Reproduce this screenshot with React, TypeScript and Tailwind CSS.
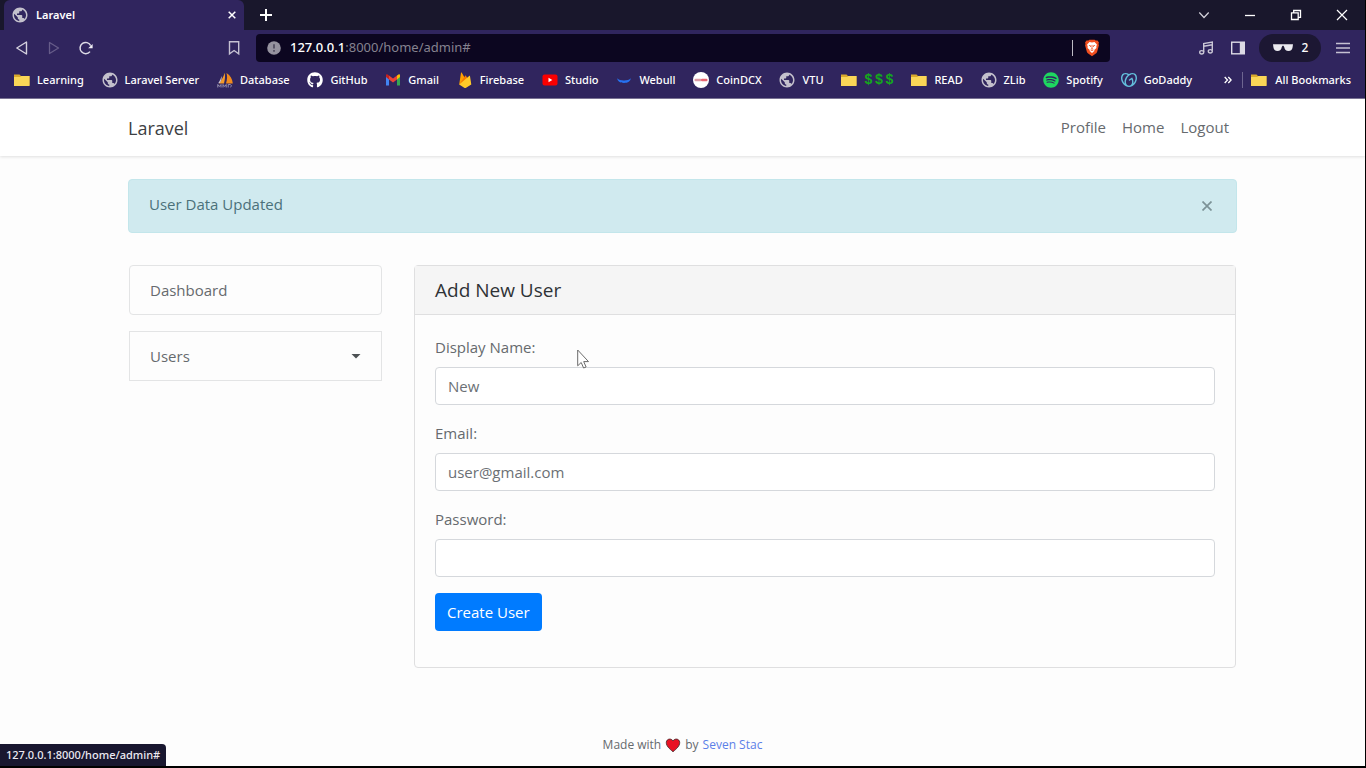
import type { ReactNode } from "react";
import { FaGithub, FaSpotify } from "react-icons/fa";
import { MdPublic } from "react-icons/md";
import { SiGodaddy } from "react-icons/si";

function GlobeIcon() {
  return <MdPublic className="-m-px size-[18px] shrink-0 text-[#c3c0cc]" />;
}

function FolderIcon() {
  return (
    <svg viewBox="0 0 16 16" className="size-4 shrink-0" aria-hidden="true">
      <path d="M0 2.500h5.500l1.500 1.500h8.500v9.500H0Z" fill="#d9a92c" />
      <path d="M0 5h6l1.500-1h8v10H0Z" fill="#fad657" />
    </svg>
  );
}

function DatabaseIcon() {
  return (
    <svg viewBox="0 0 16 16" className="size-4 shrink-0" aria-hidden="true">
      <path d="M7.500.8C8.500 4 8 7 7 11.500H2C5 7.500 6.800 4.500 7.500.8Z" fill="#f39a2b" />
      <path d="M9.500 1c4 2.500 5.800 6 6.300 10.500H9C10.200 7.500 10.500 4.500 9.500 1Z" fill="#f08a1d" />
      <path d="M4.500 4C4 6.500 3 8.500 1.200 11.300l1.800-.3C4.500 8 5 6 4.500 4Z" fill="#c9c3d6" />
      <path d="M.8 15.500v-3l1.600 2 1.600-2v3M6 15.500v-3l1.600 2 1.600-2v3M11.200 15.500v-3h2l1.500 1.400-1.500 1.300" fill="none" stroke="#9690ad" />
    </svg>
  );
}

function GmailIcon() {
  return (
    <svg viewBox="0 0 16 16" className="size-4 shrink-0" aria-hidden="true">
      <path d="M1 4v9.500h3V6.500Z" fill="#4285f4" />
      <path d="M15 4v9.500h-3V6.500Z" fill="#34a853" />
      <path d="M12 3.500 13.500 2.500c.9-.4 1.500.2 1.500 1.200V5l-3 2.500Z" fill="#fbbc04" />
      <path d="M4 3.500 2.500 2.500C1.600 2.100 1 2.700 1 3.700V5l3 2.500Z" fill="#c5221f" />
      <path d="M4 3.500v4l4 3 4-3v-4l-4 3Z" fill="#ea4335" />
    </svg>
  );
}

function FirebaseIcon() {
  return (
    <svg viewBox="0 0 16 16" className="size-4 shrink-0" aria-hidden="true">
      <path d="M2.200 12.500 4 .8c.1-.5.600-.5.800-.1L9.500 9Z" fill="#ffa000" />
      <path d="m2.200 12.500 6-8.800c.2-.4.600-.4.800 0l2 3.800Z" fill="#f57c00" />
      <path d="m2.200 12.500 10-8.500c.3-.3.800-.1.800.3l1.300 8.200-5.200 3.200c-.6.300-1.300.3-1.900 0Z" fill="#ffca28" />
    </svg>
  );
}

function StudioIcon() {
  return (
    <svg viewBox="0 0 16 16" className="size-4 shrink-0" aria-hidden="true">
      <rect x=".5" y="2.500" width="15" height="11" rx="2" fill="#fa0000" />
      <path d="M6.500 5.800v4.400L10.300 8Z" fill="#fff" />
    </svg>
  );
}

function WebullIcon() {
  return (
    <svg viewBox="0 0 16 16" className="size-4 shrink-0" aria-hidden="true">
      <path d="M1.200 6.300C2.500 8 5 8.400 8 8.400s5.500-.4 6.800-2.100C14.500 9.300 12 11 8 11S1.500 9.300 1.200 6.300Z" fill="#2671f0" />
    </svg>
  );
}

function CoinIcon() {
  return (
    <svg viewBox="0 0 16 16" className="size-4 shrink-0" aria-hidden="true">
      <circle cx="8" cy="8" r="8" fill="#fff" />
      <rect x="1.500" y="6.800" width="7" height="2.400" rx="1" fill="#dc9aa4" />
      <rect x="8" y="6.800" width="6.500" height="2.400" rx="1" fill="#e86470" />
    </svg>
  );
}

function BraveIcon() {
  return (
    <svg viewBox="0 0 18 20" className="h-[18px] w-4 shrink-0" aria-hidden="true">
      <path d="m5 1.500 1-.8h6l1 .8 2.200.1 1.600 2.300-.5 1.500.5 1.500-2 7.300c-.3 1-.7 1.500-1.500 2L9 19.300l-4.300-3.100c-.8-.5-1.200-1-1.500-2l-2-7.300.5-1.500-.5-1.500 1.600-2.300Z" fill="#f04e1f" />
      <path d="m9 3.800 2.800-.5 2.700 2.900-.7 2.300.2 1.500-2.500 2.200.2 1.200L9 15.600l-2.700-2.200.2-1.200L4 10l.2-1.500-.7-2.300 2.700-2.900Z" fill="#fff" />
      <path d="m5.500 7 2.300.7-.8 1.200M12.500 7l-2.300.7.8 1.200M9 6.500v4.300l-1.500.7M9 10.800l1.500.7M7.500 13.200 9 12.400l1.500.8" fill="none" stroke="#f04e1f" strokeWidth=".9" />
    </svg>
  );
}

function MoneyLabel() {
  return (
    <span className="flex gap-0.5 font-['Liberation_Mono',monospace] text-sm leading-4 font-bold text-[#14a81c]">
      <span>$</span>
      <span>$</span>
      <span>$</span>
    </span>
  );
}

type Bookmark = { id: string; icon: ReactNode; label?: ReactNode };

const bookmarks: Bookmark[] = [
  { id: "Learning", icon: <FolderIcon /> },
  { id: "Laravel Server", icon: <GlobeIcon /> },
  { id: "Database", icon: <DatabaseIcon /> },
  { id: "GitHub", icon: <FaGithub className="size-4 shrink-0" /> },
  { id: "Gmail", icon: <GmailIcon /> },
  { id: "Firebase", icon: <FirebaseIcon /> },
  { id: "Studio", icon: <StudioIcon /> },
  { id: "Webull", icon: <WebullIcon /> },
  { id: "CoinDCX", icon: <CoinIcon /> },
  { id: "VTU", icon: <GlobeIcon /> },
  { id: "$ $ $", icon: <FolderIcon />, label: <MoneyLabel /> },
  { id: "READ", icon: <FolderIcon /> },
  { id: "ZLib", icon: <GlobeIcon /> },
  { id: "Spotify", icon: <FaSpotify className="size-4 shrink-0 text-[#1ed760]" /> },
  { id: "GoDaddy", icon: <SiGodaddy className="size-4 shrink-0 text-[#63bfdc]" /> },
];

function TabStrip() {
  return (
    <div className="flex h-[30px] items-stretch bg-[#19172c] pl-1 text-white">
      <div className="flex w-60 items-center rounded-t-md bg-[#30255e] pr-1 pl-2">
        <GlobeIcon />
        <span className="ml-2 flex-1 text-[11px] font-semibold">Laravel</span>
        <button type="button" aria-label="Close tab" className="p-1">
          <svg viewBox="0 0 8 8" className="size-2" stroke="#fff" strokeWidth="1.500">
            <path d="m.7.700 6.600 6.600M7.300.700.700 7.300" />
          </svg>
        </button>
      </div>
      <button type="button" aria-label="New tab" className="ml-2 px-2">
        <svg viewBox="0 0 12 12" className="size-3" stroke="#fff" strokeWidth="2">
          <path d="M6 0v12M0 6h12" />
        </svg>
      </button>
      <div className="ml-auto flex items-center gap-[34px] pr-[17px]">
        <button type="button" aria-label="Search tabs">
          <svg viewBox="0 0 12 12" className="size-3" fill="none" stroke="#d5d3dc" strokeWidth="1.200">
            <path d="m1.300 3.500 4.700 5 4.700-5" />
          </svg>
        </button>
        <button type="button" aria-label="Minimize">
          <svg viewBox="0 0 12 12" className="size-3" stroke="#fff" strokeWidth="1.300">
            <path d="M1 6.500h10" />
          </svg>
        </button>
        <button type="button" aria-label="Restore">
          <svg viewBox="0 0 12 12" className="size-3" fill="none" stroke="#fff" strokeWidth="1.300">
            <path d="M1.500 3.800h6.700v6.700H1.500ZM3.700 3.500v-2h6.800v6.800h-2" />
          </svg>
        </button>
        <button type="button" aria-label="Close window">
          <svg viewBox="0 0 12 12" className="size-3" stroke="#fff" strokeWidth="1.200">
            <path d="m1 1 10 10M11 1 1 11" />
          </svg>
        </button>
      </div>
    </div>
  );
}

function Toolbar() {
  return (
    <div className="flex h-9 items-center pr-3.5">
      <div className="flex flex-none items-center gap-4 pl-3.5">
        <button type="button" aria-label="Back">
          <svg viewBox="0 0 16 16" className="size-4" fill="none" stroke="#d4d1de" strokeWidth="1.400" strokeLinejoin="round">
            <path d="M12.500 2v12L2.800 8Z" />
          </svg>
        </button>
        <button type="button" aria-label="Forward">
          <svg viewBox="0 0 16 16" className="size-4" fill="none" stroke="#665c89" strokeWidth="1.300" strokeLinejoin="round">
            <path d="M3.500 2.500v11L12.500 8Z" />
          </svg>
        </button>
        <button type="button" aria-label="Reload">
          <svg viewBox="0 0 16 16" className="size-4" fill="none" stroke="#dddbe6" strokeWidth="1.500">
            <path d="M12 11.600A5.600 5.600 0 1 1 12.700 5.600" />
            <path d="M14.600 4v4.200H10.200Z" fill="#f0eff5" stroke="none" />
          </svg>
        </button>
      </div>
      <button type="button" aria-label="Bookmark this page" className="ml-[132px]">
        <svg viewBox="0 0 16 16" className="size-4" fill="none" stroke="#c5c1d2" strokeWidth="1.400">
          <path d="M3.500 1.800h9.200v12L8.100 10.500 3.500 13.800Z" />
        </svg>
      </button>
      <div className="ml-3.5 flex h-7 flex-1 items-center rounded bg-[#0c0620] pr-2.5 pl-2.5">
        <svg viewBox="0 0 16 16" className="size-4 shrink-0" aria-hidden="true">
          <circle cx="8" cy="8" r="6.800" fill="#96939f" />
          <path d="M8 4.300v4.300M8 10v1.700" stroke="#4b475a" strokeWidth="1.600" />
        </svg>
        <div className="ml-2 flex-1 text-[13px] text-[#85828f]">
          <span className="font-medium text-white">127.0.0.1</span>:8000/home/admin#
        </div>
        <span className="mr-[11px] h-4 w-px bg-[#bdbbc5]" />
        <BraveIcon />
      </div>
      <div className="ml-[88px] flex items-center gap-4">
        <button type="button" aria-label="Media controls">
          <svg viewBox="0 0 16 16" className="size-4" fill="none" stroke="#c9c6d5" strokeWidth="1.400">
            <path d="M5.700 12V3.500L14.300 2v8.500M5.700 6.200l8.600-1.500" />
            <ellipse cx="3.700" cy="12.300" rx="2" ry="1.700" />
            <ellipse cx="12.300" cy="11.300" rx="2" ry="1.700" />
          </svg>
        </button>
        <button type="button" aria-label="Side panel">
          <svg viewBox="0 0 16 16" className="size-4" aria-hidden="true">
            <rect x="1.700" y="2.200" width="12.600" height="11.600" fill="none" stroke="#dcdae5" strokeWidth="1.400" />
            <path d="M9.800 2h4.500v12H9.800Z" fill="#dcdae5" />
          </svg>
        </button>
      </div>
      <button
        type="button"
        aria-label="2 private windows"
        className="ml-[13px] flex h-7 w-[62px] items-center justify-center gap-2 rounded-full bg-[#1c1733] text-xs font-medium text-white"
      >
        <svg viewBox="0 0 22 10" className="h-2.5 w-[22px]" aria-hidden="true">
          <path d="M1 1.200h20l-.4 3C20.300 6.500 19 8 16.500 8c-2.600 0-3.800-1.200-4.300-4L11.500 2.800h-1L9.800 4C9.300 6.800 8.100 8 5.500 8 3 8 1.700 6.500 1.400 4.200Z" fill="#ebeaf0" />
        </svg>
        2
      </button>
      <button type="button" aria-label="Menu" className="ml-3.5">
        <svg viewBox="0 0 16 16" className="size-4" stroke="#c5c1d2" strokeWidth="1.400">
          <path d="M1 3.500h14M1 8h14M1 12.500h14" />
        </svg>
      </button>
    </div>
  );
}

function BookmarksBar() {
  return (
    <nav aria-label="Bookmarks" className="flex h-8 items-center pr-3.5 pb-1 pl-3.5 text-[11px] font-medium text-white">
      <div className="flex flex-1 justify-between">
        {bookmarks.map((b) => (
          <a key={b.id} href="#" className="flex items-center gap-[7px] whitespace-nowrap">
            {b.icon}
            {b.label ?? b.id}
          </a>
        ))}
      </div>
      <button type="button" aria-label="More bookmarks" className="ml-8">
        <svg viewBox="0 0 8 8" className="size-2" fill="none" stroke="#fff" strokeWidth="1.300">
          <path d="m.7 1 2.800 3L.7 7M4.300 1l2.800 3-2.800 3" />
        </svg>
      </button>
      <span className="mr-2 ml-2.5 h-4 w-px bg-[#6d6590]" />
      <a href="#" className="flex items-center gap-2 whitespace-nowrap">
        <FolderIcon />
        All Bookmarks
      </a>
    </nav>
  );
}

function Field({ id, label, type, value }: { id: string; label: string; type: string; value?: string }) {
  return (
    <div className="mb-4">
      <label htmlFor={id} className="mb-2 block leading-6">
        {label}
      </label>
      <input
        id={id}
        type={type}
        defaultValue={value}
        className="block h-[38px] w-full rounded border border-[#d5d8dc] bg-white px-3 text-[#6b7075]"
      />
    </div>
  );
}

export default function App() {
  return (
    <div className="flex min-h-screen flex-col border-r border-b-2 border-black bg-[#fdfdfd] font-['Open_Sans','Noto_Sans',sans-serif] text-[#666a6e]">
      <header className="border-b border-[#7c7596] bg-[#30255e] font-['Noto_Sans','Open_Sans',sans-serif]">
        <TabStrip />
        <Toolbar />
        <BookmarksBar />
      </header>

      <nav className="bg-white px-4 shadow-[0_1px_3px_rgba(0,0,0,0.12)]">
        <div className="mx-auto flex h-[57px] max-w-[1109px] items-center justify-between">
          <a href="#" className="text-lg text-[#3d4043]">
            Laravel
          </a>
          <div className="flex gap-4 pr-2 text-[15px]">
            <a href="#">Profile</a>
            <a href="#">Home</a>
            <a href="#">Logout</a>
          </div>
        </div>
      </nav>

      <main className="px-4 pt-[23px] text-[15px]">
        <div className="mx-auto max-w-[1109px]">
          <div role="alert" className="flex h-[54px] items-center justify-between rounded border border-[#c3e6eb] bg-[#d0eaef] pr-6 pl-5 text-[#4b717a]">
            <span className="pb-1">User Data Updated</span>
            <button type="button" aria-label="Close">
              <svg viewBox="0 0 10 10" className="size-2.5" stroke="#7c9297" strokeWidth="1.700">
                <path d="m.5.500 9 9M9.500.500l-9 9" />
              </svg>
            </button>
          </div>

          <div className="mt-8 flex items-start gap-8 px-px">
            <aside className="flex w-[253px] flex-none flex-col gap-4">
              <a href="#" className="flex h-[50px] items-center rounded-sm border border-[#e3e4e5] px-5">
                Dashboard
              </a>
              <button type="button" className="flex h-[50px] items-center justify-between border border-[#e3e4e5] px-5">
                Users
                <svg viewBox="0 0 10 5" className="h-[5px] w-2.5" aria-hidden="true">
                  <path d="M.5 0h9L5 4.500Z" fill="#4d5154" />
                </svg>
              </button>
            </aside>

            <section className="flex-1 rounded border border-[#dfdfe0]">
              <h1 className="flex h-[49px] items-center border-b border-[#dfdfe0] bg-[#f5f5f5] px-5 text-[19px] font-medium text-[#2f3336]">
                Add New User
              </h1>
              <form className="px-5 pt-5 pb-9">
                <Field id="display-name" label="Display Name:" type="text" value="New" />
                <Field id="email" label="Email:" type="email" value="user@gmail.com" />
                <Field id="password" label="Password:" type="password" />
                <button type="button" className="h-[38px] rounded bg-[#007bff] px-3 font-medium text-white">
                  Create User
                </button>
              </form>
            </section>
          </div>
        </div>
      </main>

      <footer className="mt-auto flex items-center justify-center gap-1 pb-3 text-xs leading-[18px]">
        Made with
        <svg viewBox="0 0 16 16" className="size-4" role="img" aria-label="love">
          <path d="M8 14.700C4 11.500 1.300 8.800 1.300 5.600c0-2 1.500-3.500 3.400-3.500C6.200 2.100 7.400 2.900 8 4c.6-1.100 1.800-1.900 3.300-1.900 1.900 0 3.400 1.500 3.400 3.500 0 3.200-2.700 5.900-6.700 9.100Z" fill="#e81224" stroke="#4a2528" strokeWidth=".9" />
        </svg>
        by
        <a href="#" className="text-[#5b80e8]">
          Seven Stac
        </a>
      </footer>

      <div className="fixed bottom-0.5 left-0 flex h-[22px] items-center rounded-tr bg-[#19172f] px-1.5 font-['Noto_Sans',sans-serif] text-[11px] font-medium text-[#eceaf2]">
        127.0.0.1:8000/home/admin#
      </div>

      <svg viewBox="0 0 12 20" className="pointer-events-none fixed top-[349px] left-[577px] h-5 w-3" aria-hidden="true">
        <path d="M.7 1v15.800l3.500-3.300 2.400 5.500 2.500-1-2.400-5.400h4.800Z" fill="#fff" stroke="#6b6b6b" />
      </svg>
    </div>
  );
}
